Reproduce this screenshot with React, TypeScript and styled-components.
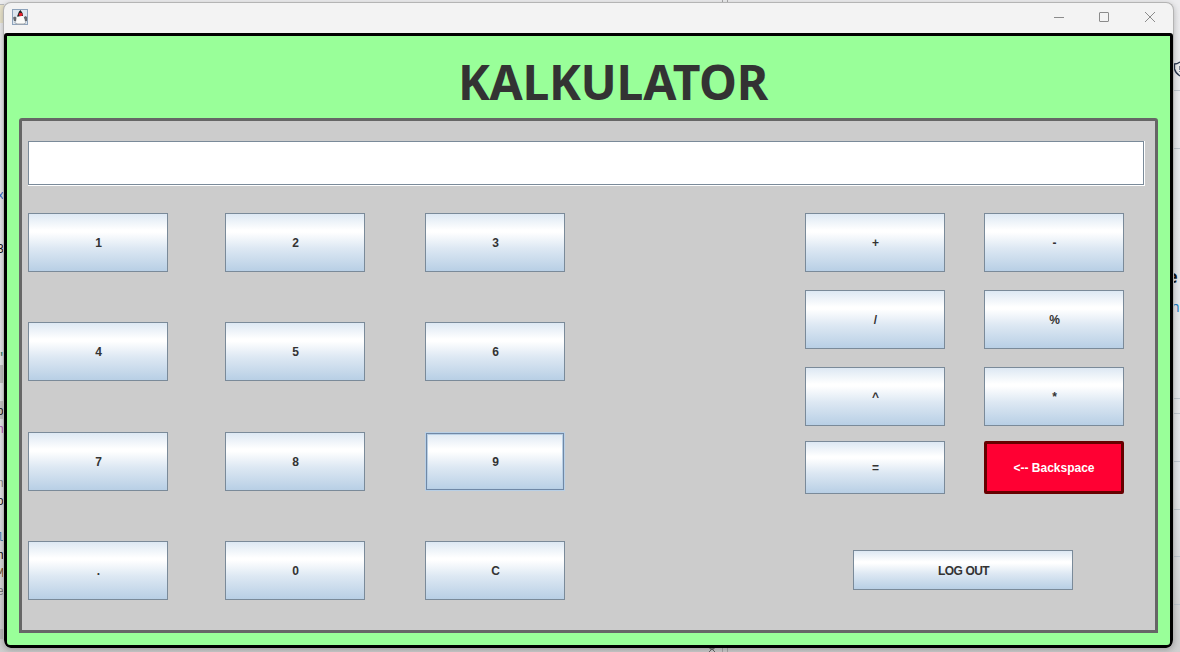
import React from "react";
import styled, { createGlobalStyle, css } from "styled-components";

const GlobalStyle = createGlobalStyle`
  *, *::before { box-sizing: border-box; }
  body { margin: 0; background: #e9ebed; overflow: hidden; }
`;

const Desktop = styled.div`
  width: 1180px;
  height: 652px;
  display: grid;
  grid-template-columns: 3px 1171px 6px;
  grid-template-rows: 2px 646px 4px;
  overflow: hidden;
  background: linear-gradient(#ececee 0, #e7e9ec 30%, #e4e6e9 75%, #cfcfcf 100%);
  font-family: "Liberation Sans", Arial, sans-serif;
`;

const EdgeStrip = styled.div`
  grid-column: 1 / -1;
  display: flex;
  padding-left: 708px;
`;

const SplitBar = styled.div<{ $offset: number }>`
  width: 6px;
  margin-left: ${(p) => p.$offset}px;
  border: solid #a8a8a8;
  border-width: 0 1px;
`;

const Editor = styled.div`
  display: flex;
  flex-direction: column;
  border-top: 1px solid #b9bbbd;
  margin-top: 2px;
  width: 4px;
`;

const CodeLine = styled.div<{ $color?: string; $bg?: string }>`
  flex: none;
  height: 18px;
  display: flex;
  justify-content: flex-end;
  background: ${(p) => p.$bg ?? "transparent"};
  color: ${(p) => p.$color ?? "#111"};
  font: 12px / 22px "Liberation Mono", monospace;
`;

const StatusLine = styled.div`
  height: 10px;
  margin-top: 12px;
  background: #bcbcbc;
`;

const Browser = styled.div`
  display: flex;
  flex-direction: column;
`;

const BrowserRow = styled.div<{ $h: number; $pad?: number }>`
  flex: none;
  height: ${(p) => p.$h}px;
  padding-top: ${(p) => p.$pad ?? 0}px;
  border-bottom: 1px solid #c0c8d0;
`;

const PageHeading = styled.div`
  text-indent: -7px;
  font: bold 18px / 18px "Open Sans", sans-serif;
  color: #111;
`;

const PageLink = styled.div`
  margin-top: 13px;
  text-indent: -3px;
  font: 14px / 18px "Open Sans", sans-serif;
  color: #1475bd;
`;

const Window = styled.main`
  z-index: 1;
  display: flex;
  flex-direction: column;
  border: 1px solid #b4b4b4;
  border-bottom: 0;
  border-radius: 8px;
  background: #f3f3f3;
  overflow: hidden;
  box-shadow: 0 2px 6px rgba(0, 0, 0, 0.25);
`;

const TitleBar = styled.header`
  flex: none;
  height: 30px;
  display: flex;
  align-items: center;
  justify-content: space-between;
  padding: 0 17px 2px 8px;
`;

const Controls = styled.div`
  display: flex;
  gap: 34px;
`;

const Content = styled.section`
  flex: 1;
  display: flex;
  flex-direction: column;
  border: 3px solid #000;
  border-radius: 3px 3px 6px 6px;
  background: #99ff99;
  padding: 0 12px 12px;
`;

const Heading = styled.h1`
  margin: 0;
  height: 82px;
  padding: 13px 0 0 49px;
  text-align: center;
  font: bold 48px / 66px "Noto Sans", "Open Sans", sans-serif;
  letter-spacing: -0.3px;
  color: #333;
  white-space: nowrap;
`;

const Panel = styled.div`
  flex: 1;
  border: 3px solid #666;
  border-radius: 3px 3px 0 0;
  background: #ccc;
  padding: 20px 10px 0 6px;
`;

const Display = styled.div`
  height: 45px;
  padding: 0 1px 1px 0;
  background: #fff;

  &::before {
    content: "";
    display: block;
    height: 44px;
    border: 1px solid #7a8a99;
  }
`;

const Pads = styled.div`
  display: flex;
  justify-content: space-between;
  padding: 27px 21px 0 0;
`;

const Digits = styled.div`
  display: grid;
  grid-template-columns: 197px 200px 140px;
  grid-template-rows: 109px 110px 109px 59px;
`;

const Side = styled.div`
  display: flex;
  flex-direction: column;
  gap: 56px;
`;

const Operators = styled.div`
  display: grid;
  grid-template-columns: 179px 140px;
  grid-template-rows: 77px 77px 74px 53px;
`;

const Key = styled.button<{ $h?: number; $w?: number; $focused?: boolean }>`
  display: flex;
  align-items: center;
  justify-content: center;
  width: ${(p) => p.$w ?? 140}px;
  height: ${(p) => p.$h ?? 59}px;
  padding: 0 0 0 1px;
  border: 1px solid #7a8a99;
  border-radius: 0;
  background: linear-gradient(#dde8f3 0, #fff 28%, #fff 32%, #dde8f3 60%, #b8cfe5 100%);
  font: bold 12px / 14px "Liberation Sans", Arial, sans-serif;
  color: #333;
  white-space: pre;
  ${(p) =>
    p.$focused &&
    css`
      border-color: #b8cfe5;
      box-shadow: inset 0 0 0 1px #7088a6, inset 0 0 0 2px #b8cfe5;
    `}
`;

const BackspaceKey = styled(Key)`
  padding: 0;
  border: 3px solid #660000;
  border-radius: 2px;
  background: #ff0033;
  color: #fff;
`;

const LogoutKey = styled(Key)`
  margin-left: 48px;
  padding-top: 2px;
  letter-spacing: -0.6px;
  word-spacing: 0.6px;
`;

const digits = ["1", "2", "3", "4", "5", "6", "7", "8", "9", ".", "0", "C"];
const operators = ["+", "-", "/", "%", "^", "*"];

type Line = { text?: string; color?: string; bg?: string };
const marked: Record<number, Line> = {
  0: { bg: "#e9e3cb" },
  10: { text: "x", color: "#3465c0" },
  13: { text: "3" },
  19: { text: '"', color: "#287858" },
  20: { bg: "#c0c0c0" },
  22: { text: "o", bg: "#c5c5c5" },
  23: { text: "n", color: "#b55ab5" },
  26: { text: "n", color: "#888" },
  27: { text: "o" },
  29: { text: "l", color: "#4b82b0" },
  30: { text: "n" },
  31: { text: "M", color: "#7b562d" },
  32: { text: "e", color: "#777" },
};
const lines: Line[] = Array.from({ length: 34 }, (_, i) => marked[i] ?? {});

const JavaIcon = () => (
  <svg width="16" height="16" viewBox="0 0 16 16">
    <rect x=".5" y=".5" width="15" height="15" fill="#dce5ee" stroke="#8ea3bb" />
    <path d="M1 8.500 3 7.500 5 9 4.500 12.500 2 12zM11.500 8.500 13.500 7 15 8v4l-2 .5z" fill="#65696e" />
    <path d="M4.500 8.500 6.500 7.500 11 7l1.500 3 .5 4-2 1H6l-2-1.500z" fill="#fbfbf9" />
    <path d="M8.500 1 7 2.500 5 7.500 7 7.500 8 7h3L10.500 4z" fill="#222" />
    <path d="M2.500 13.500 5 15H12l2-1.500" fill="none" stroke="#a2a6aa" />
    <ellipse cx="8.700" cy="5.500" rx="1.900" ry="1.700" fill="#e6202b" />
  </svg>
);

export default function App() {
  return (
    <>
      <GlobalStyle />
      <Desktop>
        <EdgeStrip>
          <SplitBar $offset={14} />
        </EdgeStrip>
        <Editor>
          {lines.map((l, i) => (
            <CodeLine key={i} $color={l.color} $bg={l.bg}>{l.text}</CodeLine>
          ))}
          <StatusLine />
        </Editor>
        <Window>
          <TitleBar>
            <JavaIcon />
            <Controls>
              <svg width="12" height="12" stroke="#8b8b8b" fill="none">
                <path d="M2 6.500h10" />
              </svg>
              <svg width="12" height="12" stroke="#8b8b8b" fill="none">
                <rect x="1.500" y="1.500" width="9" height="9" rx=".5" />
              </svg>
              <svg width="12" height="12" stroke="#8b8b8b" fill="none">
                <path d="m1 1 10 10M11 1 1 11" />
              </svg>
            </Controls>
          </TitleBar>
          <Content>
            <Heading>KALKULATOR</Heading>
            <Panel>
              <Display />
              <Pads>
                <Digits>
                  {digits.map((d) => (
                    <Key key={d} $focused={d === "9"}>{d}</Key>
                  ))}
                </Digits>
                <Side>
                  <Operators>
                    {operators.map((o) => (
                      <Key key={o}>{o}</Key>
                    ))}
                    <Key $h={53}>=</Key>
                    <BackspaceKey $h={53}>{"<-- Backspace"}</BackspaceKey>
                  </Operators>
                  <LogoutKey $w={220} $h={40}>LOG OUT</LogoutKey>
                </Side>
              </Pads>
            </Panel>
          </Content>
        </Window>
        <Browser>
          <BrowserRow $h={89} $pad={59}>
            <svg width="6" height="16" viewBox="1 0 6 16" fill="none" stroke="#26324b">
              <path d="M7 1Q4 3 1.500 3v5q1 4 5.500 7" strokeWidth="1.300" />
              <path d="M6.500 5v4M6.500 10v1" stroke="#7b8491" />
            </svg>
          </BrowserRow>
          <BrowserRow $h={58} />
          <BrowserRow $h={250} $pad={118}>
            <PageHeading>e</PageHeading>
            <PageLink>h</PageLink>
          </BrowserRow>
          {[15, 48, 48, 47, 48].map((h, i) => (
            <BrowserRow key={i} $h={h} />
          ))}
        </Browser>
        <EdgeStrip>
          <svg width="8" height="4">
            <path d="M2 0h4v1H2zM1 4 4 1 7 4" fill="none" stroke="#666" />
          </svg>
          <SplitBar $offset={6} />
        </EdgeStrip>
      </Desktop>
    </>
  );
}
